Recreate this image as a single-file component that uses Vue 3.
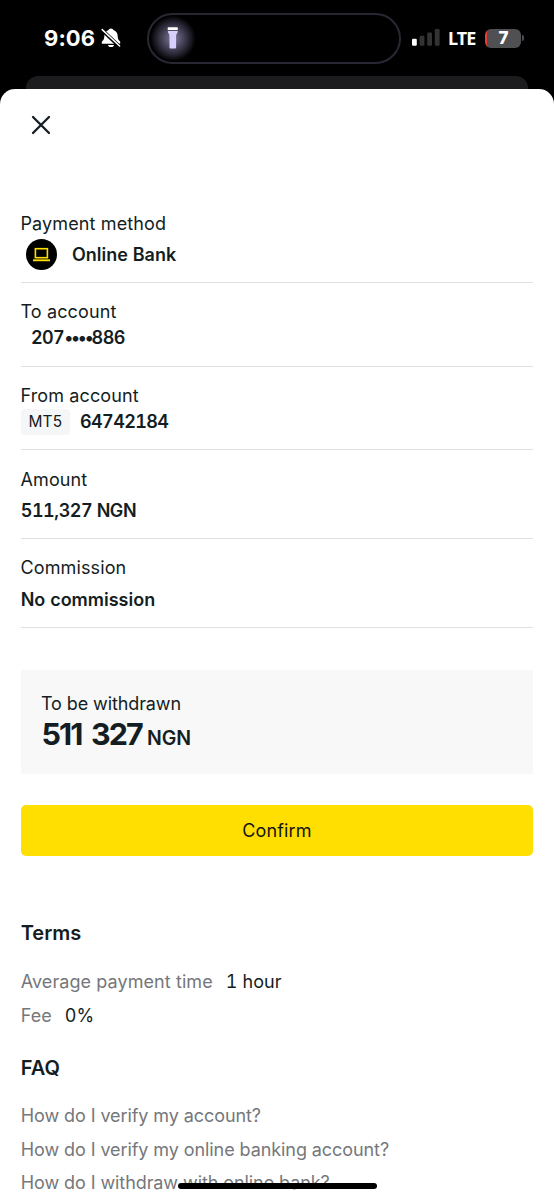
<script setup>
const rows = [
  { label: 'Payment method', value: ['Online Bank'], kind: 'method' },
  { label: 'To account', value: ['207', '••••', '886'], kind: 'masked' },
  { label: 'From account', value: ['64742184'], kind: 'account', tag: 'MT5' },
  { label: 'Amount', value: ['511,327 NGN'], kind: 'amount' },
  { label: 'Commission', value: ['No commission'], kind: 'commission' },
]
const terms = [
  { name: 'Average payment time', value: '1 hour', kind: 'time' },
  { name: 'Fee', value: '0%', kind: 'fee' },
]
const questions = [
  'How do I verify my account?',
  'How do I verify my online banking account?',
  'How do I withdraw with online bank?',
]
</script>

<template>
  <div class="screen">
    <header class="status">
      <span class="clock">9:06</span>
      <svg class="bell" width="20" height="20" viewBox="0 0 20 20">
        <path d="M10 .4c-1.400 0-2.200.8-2.400 1.700C4.800 3 3.400 5.200 3.300 8.200c0 2.800-.8 3.600-1.900 4.800-.6.6-.9 1.200-.7 1.900.2.6.8.8 1.600.8h15.400c.8 0 1.400-.2 1.600-.8.2-.7-.1-1.300-.7-1.900-1.100-1.200-1.900-2-1.900-4.800-.1-3-1.500-5.200-4.300-6.100C12.200 1.200 11.400.4 10 .4ZM7 16.900h6c-.3 1.500-1.500 2.200-3 2.200s-2.700-.7-3-2.200Z" fill="#fff" />
        <path d="M.6 1.600 18.600 18.600" stroke="#000" stroke-width="3.600" />
        <path d="M1.200 1.600 18.600 18" stroke="#fff" stroke-width="1.500" stroke-linecap="round" />
      </svg>
      <div class="island">
        <div class="glow">
          <svg width="12" height="24" viewBox="0 0 12 24">
            <path d="M1.400 1.300h8.800q.6 0 .6.6V4H.7V1.900q0-.6.7-.6Z" fill="#fff" />
            <path d="M.8 4.900h10c0 2.300-1.700 2.600-1.700 5v11.600q0 1-1 1H3.500q-1 0-1-1V9.900C2.500 7.500.8 7.200.8 4.900Z" fill="#d5d1fa" />
          </svg>
        </div>
      </div>
      <svg class="signal" width="28" height="18" viewBox="0 0 28 18">
        <rect x="0" y="9.800" width="4.800" height="7" rx="1.200" fill="#fff" />
        <rect x="7.600" y="6.800" width="4.800" height="10" rx="1.200" fill="#333335" />
        <rect x="15.200" y="3.400" width="4.800" height="13.400" rx="1.200" fill="#333335" />
        <rect x="22.800" y="0" width="4.800" height="16.800" rx="1.200" fill="#333335" />
      </svg>
      <span class="lte">LTE</span>
      <div class="battery"><span>7</span></div>
      <i class="battery-tip"></i>
    </header>
    <div class="behind"></div>
    <main class="sheet">
      <svg class="close" width="20" height="20" viewBox="0 0 20 20">
        <path d="m2 2 16 16M18 2 2 18" stroke="#141d22" stroke-width="2.300" stroke-linecap="round" />
      </svg>
      <section class="details">
        <div v-for="row in rows" :key="row.label" class="row" :class="row.kind">
          <div class="label">{{ row.label }}</div>
          <div class="value">
            <svg v-if="row.kind === 'method'" class="bank" width="31" height="31" viewBox="0 0 31 31">
              <circle cx="15.500" cy="15.500" r="15.500" fill="#000" />
              <rect x="9.400" y="9.700" width="12" height="9" fill="none" stroke="#ffde02" stroke-width="1.600" />
              <path d="M7 21.300h17" stroke="#ffde02" stroke-width="1.900" />
            </svg>
            <span v-if="row.tag" class="tag">{{ row.tag }}</span>
            <span v-for="(part, i) in row.value" :key="i" :class="{ dots: i === 1 }">{{ part }}</span>
          </div>
        </div>
      </section>
      <section class="total">
        <div class="total-label">To be withdrawn</div>
        <div class="sum"><span class="digits">511 327</span><span class="currency">NGN</span></div>
      </section>
      <button class="confirm">Confirm</button>
      <section class="info">
        <h2>Terms</h2>
        <p v-for="term in terms" :key="term.name" :class="term.kind">
          <span>{{ term.name }}</span><b>{{ term.value }}</b>
        </p>
        <h2 class="faq">FAQ</h2>
        <p v-for="q in questions" :key="q" class="question">{{ q }}</p>
      </section>
    </main>
    <div class="home"></div>
  </div>
</template>

<style>
html, body { margin: 0; overflow: hidden; background: #000; }
</style>

<style scoped>
* { box-sizing: border-box; }
.screen { position: relative; width: 554px; height: 1200px; overflow: hidden; background: #000; font-family: Inter, "Liberation Sans", sans-serif; font-size: 18px; color: #141d22; white-space: nowrap; }
.status { display: flex; align-items: center; height: 76px; padding-left: 44px; color: #fff; }
.clock { width: 52px; font-size: 22px; font-weight: 700; letter-spacing: .1px; }
.bell { margin-left: 5px; }
.island { width: 254px; height: 51px; margin-left: 26px; border: 2px solid #292733; border-radius: 26px; }
.glow { display: flex; align-items: center; justify-content: center; width: 46px; height: 47px; margin-left: 1px; border-radius: 50%; background: radial-gradient(circle, #817d9b 0%, #55516a 24%, #252330 50%, transparent 69%); }
.signal { margin-left: 11px; }
.lte { width: 29px; margin-left: 8px; font-family: "Noto Sans", sans-serif; font-size: 18px; font-weight: 700; letter-spacing: -.9px; }
.battery { display: flex; align-items: center; justify-content: center; width: 36px; height: 19px; margin-left: 8px; padding-left: 1px; border-radius: 6px; background: linear-gradient(90deg, #e93a38 2.500px, #505052 2.500px); font-size: 17px; font-weight: 800; }
.battery-tip { width: 2px; height: 6px; margin-left: 1px; border-radius: 0 2px 2px 0; background: #505052; }
.behind { height: 13px; margin: 0 26px; border-radius: 12px 12px 0 0; background: #1c1c1e; }
.sheet { height: 1111px; padding: 26px 21px 0; border-radius: 15px 15px 0 0; background: #fff; }
.close { display: block; margin-left: 10px; }
.details { margin-top: 59px; }
.row { height: 89px; padding-top: 18px; border-bottom: 1px solid #dfe0e1; }
.row.masked { height: 84px; }
.row.account { height: 83px; }
.label { height: 22px; margin-left: -.5px; line-height: 22px; letter-spacing: .12px; }
.method .label, .amount .label { line-height: 23px; }
.value { display: flex; align-items: center; height: 40px; font-weight: 600; font-variant-numeric: tabular-nums; }
.amount .value, .commission .value { margin-left: -.3px; }
.amount .value { letter-spacing: -.45px; }
.masked .value, .account .value { height: 29px; letter-spacing: -.6px; }
.masked .value { padding-left: 10px; }
.dots { letter-spacing: -2.200px; }
.bank { margin: 0 15px 0 5px; }
.tag { width: 49px; height: 26px; margin-right: 10px; border-radius: 4px; background: #f5f6f7; font-size: 15.500px; font-weight: 400; letter-spacing: 0; line-height: 26px; text-align: center; }
.total { height: 104px; margin-top: 42px; padding: 23px 20px 0; background: #f8f8f8; }
.total-label { height: 22px; line-height: 22px; letter-spacing: -.1px; }
.sum { display: flex; align-items: baseline; height: 40px; line-height: 37px; }
.digits { width: 106px; padding-left: .5px; font-size: 30.500px; font-weight: 700; letter-spacing: -1.900px; word-spacing: 4px; }
.currency { font-size: 19.500px; font-weight: 600; letter-spacing: -.1px; }
.confirm { display: block; width: 512px; height: 51px; margin-top: 31px; padding: 0; border: 0; border-radius: 5px; background: #ffde02; color: #141414; font: inherit; letter-spacing: .15px; }
.info { margin: 62px 0 0 -.3px; color: #75777b; }
h2 { margin: 0 0 17px; height: 30px; line-height: 30px; font-size: 20px; font-weight: 600; color: #141d22; }
p { margin: 0; height: 33.500px; line-height: 33px; letter-spacing: .08px; }
.question { letter-spacing: -.08px; }
b { margin-left: 13px; font-weight: 400; color: #141d22; font-variant-numeric: tabular-nums; }
h2.faq { margin: 21px 0 16px; }
.home { position: absolute; left: 178px; top: 1183px; width: 199px; height: 6px; border-radius: 3px; background: #000; }
</style>
